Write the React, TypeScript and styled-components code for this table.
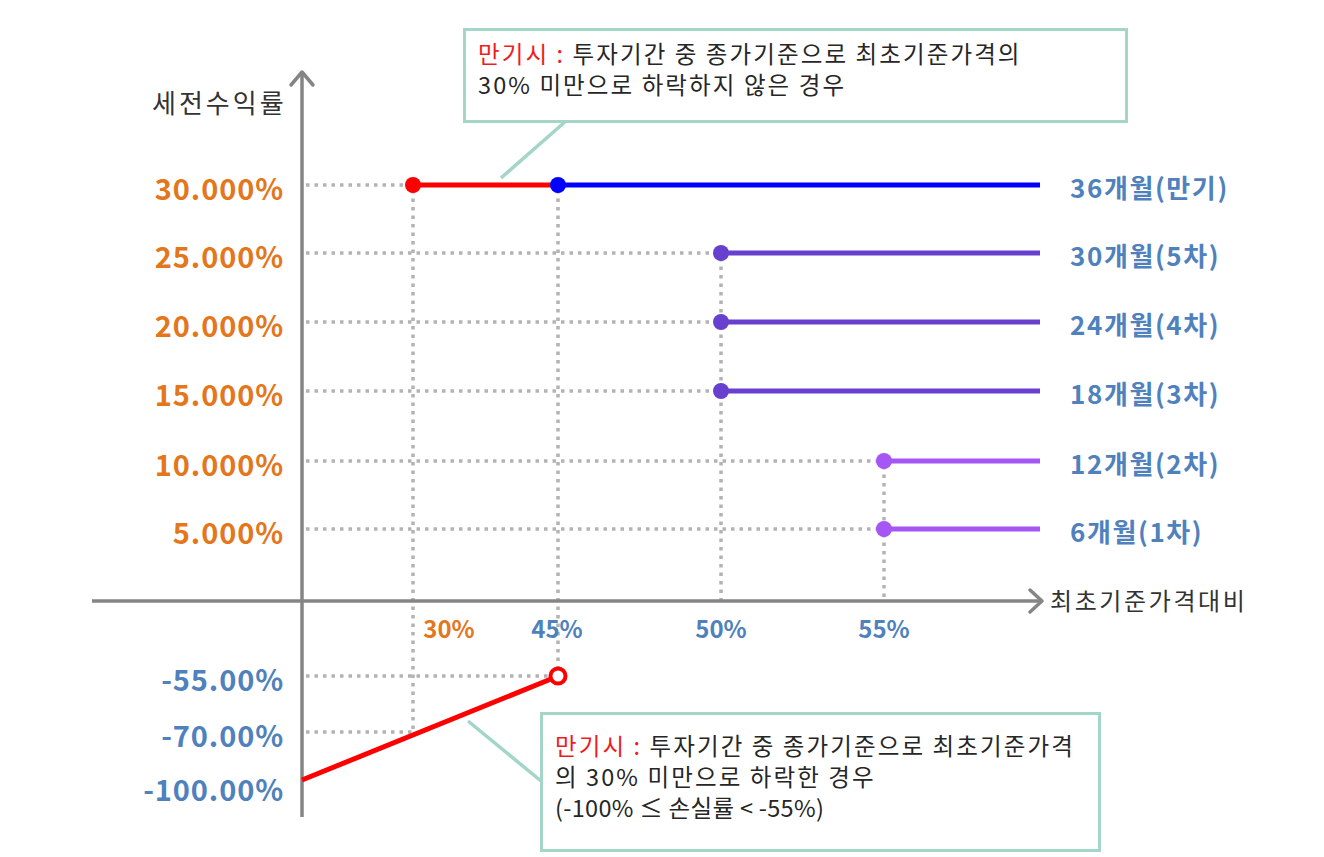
import React from "react";
import styled, { createGlobalStyle } from "styled-components";

const GlobalStyle = createGlobalStyle`
  html, body {
    margin: 0;
    padding: 0;
    background: #ffffff;
  }
  body {
    font-family: "Noto Sans CJK KR", "Noto Sans", sans-serif;
  }
`;

const Page = styled.div`
  position: relative;
  width: 1324px;
  height: 857px;
  overflow: hidden;
  background: #ffffff;
`;

const ChartSvg = styled.svg`
  display: block;
  width: 1324px;
  height: 857px;
  font-family: "Noto Sans CJK KR", "Noto Sans", sans-serif;
`;

const Callout = styled.div<{ $left: number; $top: number; $w: number; $h: number; $padTop: number }>`
  position: absolute;
  left: ${(p) => p.$left}px;
  top: ${(p) => p.$top}px;
  width: ${(p) => p.$w}px;
  height: ${(p) => p.$h}px;
  box-sizing: border-box;
  border: 3px solid #a3d6c7;
  background: #ffffff;
  padding: ${(p) => p.$padTop}px 6px 0 12px;
  display: flex;
  flex-direction: column;
  font-size: 23.5px;
  color: #262626;
  white-space: nowrap;
`;

const Line = styled.div<{ $tight?: boolean }>`
  height: 31px;
  line-height: 31px;
  display: flex;
  align-items: center;
  letter-spacing: ${(p) => (p.$tight ? "0.3px" : "2.1px")};
`;

const Hot = styled.span`
  color: #f01c1c;
  white-space: pre;
`;

const ORANGE = "#e4761c";
const BLUE = "#4f81bd";
const GRID = "#b3b3b3";
const AXIS = "#858585";
const MINT = "#a3d6c7";

const AXIS_X = 302;
const X_AXIS_Y = 601;

type Row = { y: number; label: string; series: string; start: number; color: string };

const rows: Row[] = [
  { y: 185, label: "30.000%", series: "36개월(만기)", start: 558, color: "#0000ff" },
  { y: 253, label: "25.000%", series: "30개월(5차)", start: 721, color: "#6840cf" },
  { y: 322, label: "20.000%", series: "24개월(4차)", start: 721, color: "#6840cf" },
  { y: 391, label: "15.000%", series: "18개월(3차)", start: 721, color: "#6840cf" },
  { y: 461, label: "10.000%", series: "12개월(2차)", start: 884, color: "#a656f5" },
  { y: 529, label: "5.000%", series: "6개월(1차)", start: 884, color: "#a656f5" },
];

const negRows = [
  { y: 678, label: "-55.00%" },
  { y: 734, label: "-70.00%" },
  { y: 788, label: "-100.00%" },
];

const xTicks = [
  { x: 449, label: "30%", color: ORANGE },
  { x: 557, label: "45%", color: BLUE },
  { x: 721, label: "50%", color: BLUE },
  { x: 884, label: "55%", color: BLUE },
];

const Dotted = ({ x1, y1, x2, y2 }: { x1: number; y1: number; x2: number; y2: number }) => (
  <line x1={x1} y1={y1} x2={x2} y2={y2} stroke={GRID} strokeWidth={3.5} strokeDasharray="3.5 5" />
);

export default function App() {
  return (
    <Page>
      <GlobalStyle />
      <ChartSvg viewBox="0 0 1324 857" xmlns="http://www.w3.org/2000/svg">
        {/* horizontal guide lines */}
        <Dotted x1={306} y1={185} x2={413} y2={185} />
        {rows.slice(1).map((r) => (
          <Dotted key={r.y} x1={306} y1={r.y} x2={r.start} y2={r.y} />
        ))}
        <Dotted x1={306} y1={676} x2={552} y2={676} />
        <Dotted x1={306} y1={732} x2={413} y2={732} />

        {/* vertical guide lines */}
        <Dotted x1={413} y1={190} x2={413} y2={732} />
        <Dotted x1={558} y1={190} x2={558} y2={668} />
        <Dotted x1={721} y1={258} x2={721} y2={600} />
        <Dotted x1={884} y1={466} x2={884} y2={600} />

        {/* axes */}
        <line x1={AXIS_X} y1={72} x2={AXIS_X} y2={817} stroke={AXIS} strokeWidth={3.5} />
        <polyline points="291,85 302,72 313,85" fill="none" stroke={AXIS} strokeWidth={3.5} strokeLinecap="round" strokeLinejoin="round" />
        <line x1={92} y1={X_AXIS_Y} x2={1040} y2={X_AXIS_Y} stroke={AXIS} strokeWidth={3.5} />
        <polyline points="1030,590 1042,601 1030,612" fill="none" stroke={AXIS} strokeWidth={3.5} strokeLinecap="round" strokeLinejoin="round" />

        {/* callout pointers */}
        <line x1={566} y1={121} x2={501} y2={178} stroke={MINT} strokeWidth={3.5} />
        <line x1={468} y1={721} x2={541} y2={781} stroke={MINT} strokeWidth={3.5} />

        {/* series lines */}
        <line x1={413} y1={185} x2={558} y2={185} stroke="#ff0000" strokeWidth={5} />
        {rows.map((r) => (
          <line key={`s${r.y}`} x1={r.start} y1={r.y} x2={1040} y2={r.y} stroke={r.color} strokeWidth={5} />
        ))}
        <circle cx={413} cy={185} r={8} fill="#ff0000" />
        {rows.map((r) => (
          <circle key={`c${r.y}`} cx={r.start} cy={r.y} r={8} fill={r.color} />
        ))}

        {/* loss line */}
        <line x1={302} y1={780} x2={551} y2={679} stroke="#ff0000" strokeWidth={5} />
        <circle cx={558} cy={676} r={7.5} fill="#ffffff" stroke="#ff0000" strokeWidth={4} />

        {/* axis titles */}
        <text x={152} y={101} fontSize={26} fill="#333333" dominantBaseline="central" letterSpacing={3}>
          세전수익률
        </text>
        <text x={1050} y={599} fontSize={24} fill="#333333" dominantBaseline="central" letterSpacing={2.6}>
          최초기준가격대비
        </text>

        {/* y labels */}
        {rows.map((r) => (
          <text key={`l${r.y}`} x={284} y={r.y + 2} fontSize={29} fontWeight={700} fill={ORANGE} textAnchor="end" dominantBaseline="central" letterSpacing={0.9}>
            {r.label}
          </text>
        ))}
        {negRows.map((r) => (
          <text key={`n${r.y}`} x={284} y={r.y} fontSize={29} fontWeight={700} fill={BLUE} textAnchor="end" dominantBaseline="central" letterSpacing={0.9}>
            {r.label}
          </text>
        ))}

        {/* x labels */}
        {xTicks.map((t) => (
          <text key={t.label} x={t.x} y={627} fontSize={24} fontWeight={700} fill={t.color} textAnchor="middle" dominantBaseline="central">
            {t.label}
          </text>
        ))}

        {/* series labels */}
        {rows.map((r) => (
          <text key={`t${r.y}`} x={1070} y={r.y + 1} fontSize={26} fontWeight={700} fill={BLUE} dominantBaseline="central" letterSpacing={1.6}>
            {r.series}
          </text>
        ))}
      </ChartSvg>

      <Callout $left={463} $top={28} $w={665} $h={95} $padTop={7}>
        <Line>
          <Hot>만기시 : </Hot>투자기간 중 종가기준으로 최초기준가격의
        </Line>
        <Line>30% 미만으로 하락하지 않은 경우</Line>
      </Callout>

      <Callout $left={540} $top={712} $w={561} $h={140} $padTop={15}>
        <Line>
          <Hot>만기시 : </Hot>투자기간 중 종가기준으로 최초기준가격
        </Line>
        <Line>의 30% 미만으로 하락한 경우</Line>
        <Line $tight>(-100% ≤ 손실률 &lt; -55%)</Line>
      </Callout>
    </Page>
  );
}
